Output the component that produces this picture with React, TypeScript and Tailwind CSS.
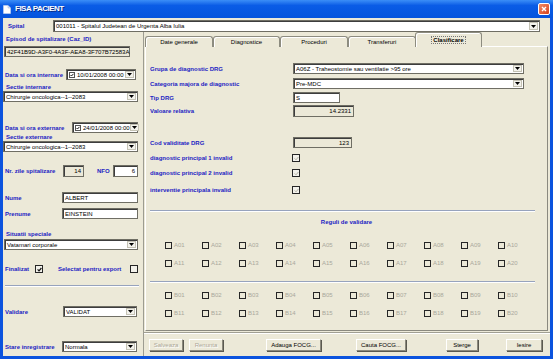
import React from "react";

const font = "font-['Liberation_Sans',Arial,sans-serif]";
const lbl = "text-[6px] leading-none font-bold text-[#2323c3] whitespace-nowrap";
const txt = "text-[6px] leading-none text-black whitespace-nowrap";

function Arrow() {
  return (
    <div className="w-[9px] my-[1px] mr-[1px] bg-[#f3f2ec] border border-[#c4c2b4] flex items-center justify-center shrink-0">
      <svg width="5" height="3" viewBox="0 0 5 3">
        <path d="M0 0H5L2.5 3Z" fill="#000" />
      </svg>
    </div>
  );
}

function Select({ value, className = "" }: { value: string; className?: string }) {
  return (
    <div
      className={`flex items-stretch h-[11px] bg-white border border-[#6f6e64] shadow-[inset_1px_1px_0_#3d3d3d] ${className}`}
    >
      <span className={`${txt} flex-1 flex items-center pl-[2px] overflow-hidden`}>{value}</span>
      <Arrow />
    </div>
  );
}

function Field({
  value,
  className = "",
  right = false,
  ro = false,
}: {
  value: string;
  className?: string;
  right?: boolean;
  ro?: boolean;
}) {
  return (
    <div
      className={`flex items-center h-[11px] border border-[#6f6e64] shadow-[inset_1px_1px_0_#3d3d3d] px-[2px] ${
        ro ? "bg-[#ECE9D8]" : "bg-white"
      } ${right ? "justify-end" : ""} ${className}`}
    >
      <span className={txt}>{value}</span>
    </div>
  );
}

function DateBox({ value, className = "" }: { value: string; className?: string }) {
  return (
    <div
      className={`flex items-stretch h-[11px] bg-white border border-[#6f6e64] shadow-[inset_1px_1px_0_#3d3d3d] ${className}`}
    >
      <div className="flex items-center pl-[2px] gap-[2px] flex-1">
        <div className="w-[6px] h-[6px] border border-[#555] bg-white flex items-center justify-center">
          <svg width="4" height="4" viewBox="0 0 4 4">
            <path d="M0.5 2L1.5 3L3.5 0.8" stroke="#000" strokeWidth="0.9" fill="none" />
          </svg>
        </div>
        <span className={txt}>{value}</span>
      </div>
      <Arrow />
    </div>
  );
}

function Check({ checked = false, faint = false, className = "" }: { checked?: boolean; faint?: boolean; className?: string }) {
  return (
    <div
      className={`w-[8px] h-[8px] border-[1.5px] border-[#252525] bg-[#f2f1ea] flex items-center justify-center shrink-0 ${className}`}
    >
      {checked && (
        <svg width="5" height="5" viewBox="0 0 5 5">
          <path d="M0.6 2.4L2 3.8L4.4 1" stroke="#111" strokeWidth="1.2" fill="none" />
        </svg>
      )}
      {faint && (
        <svg width="5" height="5" viewBox="0 0 5 5">
          <path d="M0.6 2.4L2 3.8L4.4 1" stroke="#b5b3a6" strokeWidth="1" fill="none" />
        </svg>
      )}
    </div>
  );
}

function Rule({ name }: { name: string }) {
  return (
    <div className="flex items-center gap-[2px]">
      <div className="w-[7px] h-[7px] border-[1.5px] border-[#262626] bg-[#ECE9D8]" />
      <span className="text-[6px] leading-none text-[#a9a89c] whitespace-nowrap">{name}</span>
    </div>
  );
}

function Sep({ className = "" }: { className?: string }) {
  return <div className={`h-[2px] border-t border-[#97a3bd] border-b border-b-white ${className}`} />;
}

function Btn({ label, disabled = false, className = "" }: { label: string; disabled?: boolean; className?: string }) {
  return (
    <div
      className={`h-[12px] flex items-center justify-center border border-t-white border-l-white border-r-[#8b897d] border-b-[#8b897d] shadow-[1px_1px_0_#5a5950] bg-[#ECE9D8] ${className}`}
    >
      <span
        className={`text-[6px] leading-none whitespace-nowrap ${
          disabled ? "text-[#aca899] [text-shadow:1px_1px_0_#fff]" : "text-black"
        }`}
      >
        {label}
      </span>
    </div>
  );
}

const tabs = ["Date generale", "Diagnostice", "Proceduri", "Transferuri"];
const tabW = ["w-[68px]", "w-[67px]", "w-[68px]", "w-[68px]"];

const aRow1 = ["A01", "A02", "A03", "A04", "A05", "A06", "A07", "A08", "A09", "A10"];
const aRow2 = ["A11", "A12", "A13", "A14", "A15", "A16", "A17", "A18", "A19", "A20"];
const bRow1 = ["B01", "B02", "B03", "B04", "B05", "B06", "B07", "B08", "B09", "B10"];
const bRow2 = ["B11", "B12", "B13", "B14", "B15", "B16", "B17", "B18", "B19", "B20"];

function RuleRow({ items, className = "" }: { items: string[]; className?: string }) {
  return (
    <div className={`grid grid-cols-[repeat(10,37px)] h-[8px] items-center ml-[19px] ${className}`}>
      {items.map((n) => (
        <Rule key={n} name={n} />
      ))}
    </div>
  );
}

function LeftColumn() {
  return (
    <div className="w-[140px] shrink-0 flex flex-col">
      <div className={`${lbl} h-[8px] flex items-center mt-[3px] pl-[3px]`}>Episod de spitalizare (Caz_ID)</div>
      <Field value="42F41B9D-A3F0-4A3F-AEA8-3F707B72583A" ro className="mt-[3px] ml-[1px] w-[126px]" />

      <div className="flex items-center h-[11px] mt-[12px] pl-[2px]">
        <span className={`${lbl} w-[61px]`}>Data si ora internare</span>
        <DateBox value="10/01/2008 00:00" className="w-[70px]" />
      </div>
      <div className={`${lbl} h-[8px] flex items-center mt-[3px] pl-[3px]`}>Sectie internare</div>
      <Select value="Chirurgie oncologica--1--2083" className="w-[135px]" />

      <div className="flex items-center h-[11px] mt-[20px] pl-[2px]">
        <span className={`${lbl} w-[67px]`}>Data si ora externare</span>
        <DateBox value="24/01/2008 00:00" className="w-[66px]" />
      </div>
      <div className={`${lbl} h-[8px] flex items-center pl-[3px]`}>Sectie externare</div>
      <Select value="Chirurgie oncologica--1--2083" className="w-[135px]" />

      <div className="flex items-center h-[12px] mt-[13px] pl-[2px]">
        <span className={`${lbl} w-[58px]`}>Nr. zile spitalizare</span>
        <Field value="14" ro right className="w-[21px] h-[12px]" />
        <span className={`${lbl} w-[16px] ml-[13px]`}>NFO</span>
        <Field value="6" right className="w-[25px] h-[12px]" />
      </div>

      <div className="flex items-center h-[11px] mt-[15px] pl-[2px]">
        <span className={`${lbl} w-[57px]`}>Nume</span>
        <Field value="ALBERT" className="w-[76px]" />
      </div>
      <div className="flex items-center h-[11px] mt-[5px] pl-[2px]">
        <span className={`${lbl} w-[57px]`}>Prenume</span>
        <Field value="EINSTEIN" className="w-[76px]" />
      </div>

      <div className={`${lbl} h-[8px] flex items-center mt-[11px] pl-[3px]`}>Situatii speciale</div>
      <Select value="Vatamari corporale" className="w-[134px] mt-[1px] ml-[1px]" />

      <div className="flex items-center h-[10px] mt-[14px] pl-[2px]">
        <span className={`${lbl} w-[30px]`}>Finalizat</span>
        <Check checked />
        <span className={`${lbl} w-[72px] ml-[15px]`}>Selectat pentru export</span>
        <Check />
      </div>

      <Sep className="mt-[11px] ml-[2px] w-[134px]" />

      <div className="flex items-center h-[11px] mt-[19px] pl-[2px]">
        <span className={`${lbl} w-[58px]`}>Validare</span>
        <Select value="VALIDAT" className="w-[74px]" />
      </div>
      <div className="flex items-center h-[11px] mt-[24px] pl-[2px]">
        <span className={`${lbl} w-[57px]`}>Stare inregistrare</span>
        <Select value="Normala" className="w-[75px]" />
      </div>
    </div>
  );
}

function FormRow({ label, children, className = "" }: { label: string; children: React.ReactNode; className?: string }) {
  return (
    <div className={`flex items-center pl-[4px] ${className}`}>
      <span className={`${lbl} w-[143px]`}>{label}</span>
      {children}
    </div>
  );
}

function TabPanel() {
  return (
    <div className="h-[285px] ml-[1px] mr-[2px] border border-t-white border-l-white border-r-[#8a897f] border-b-[#8a897f] bg-[#ECE9D8] flex flex-col">
      <FormRow label="Grupa de diagnostic DRG" className="mt-[16px] h-[11px]">
        <Select value="A06Z - Traheostomie sau ventilatie >95 ore" className="w-[231px]" />
      </FormRow>
      <FormRow label="Categoria majora de diagnostic" className="mt-[4px] h-[11px]">
        <Select value="Pre-MDC" className="w-[231px]" />
      </FormRow>
      <FormRow label="Tip DRG" className="mt-[3px] h-[11px]">
        <Field value="S" className="w-[47px] bg-[#f7f6f1]" />
      </FormRow>
      <FormRow label="Valoare relativa" className="mt-[2px] h-[12px]">
        <Field value="14.2331" ro right className="w-[61px] h-[12px]" />
      </FormRow>
      <FormRow label="Cod validitate DRG" className="mt-[20px] h-[11px]">
        <Field value="123" ro right className="w-[59px]" />
      </FormRow>
      <FormRow label="diagnostic principal 1 invalid" className="mt-[6px] h-[8px]">
        <Check faint className="-ml-[1px] w-[7px] h-[7px]" />
      </FormRow>
      <FormRow label="diagnostic principal 2 invalid" className="mt-[7px] h-[8px]">
        <Check faint className="-ml-[1px] w-[7px] h-[7px]" />
      </FormRow>
      <FormRow label="interventie principala invalid" className="mt-[9px] h-[8px]">
        <Check faint className="-ml-[1px] w-[7px] h-[7px]" />
      </FormRow>

      <Sep className="mt-[16px] ml-[4px] mr-[12px]" />
      <div className={`${lbl} h-[8px] mt-[6px] flex items-center justify-center`}>Reguli de validare</div>

      <RuleRow items={aRow1} className="mt-[15px]" />
      <RuleRow items={aRow2} className="mt-[10px]" />
      <Sep className="mt-[14px] ml-[4px] mr-[12px]" />
      <RuleRow items={bRow1} className="mt-[8px]" />
      <RuleRow items={bRow2} className="mt-[10px]" />
    </div>
  );
}

function RightColumn() {
  return (
    <div className="flex-1 flex flex-col border-l border-[#9d9c91]">
      <div className="h-[14px] flex items-end pl-[1px] relative z-10">
        {tabs.map((t, i) => (
          <div
            key={t}
            className={`${tabW[i]} h-[11px] -mb-[1px] border border-b-0 border-[#8d8c80] rounded-t-[3px] bg-[#ECE9D8] flex items-center justify-center shadow-[inset_1px_1px_0_#fff]`}
          >
            <span className={txt}>{t}</span>
          </div>
        ))}
        <div className="w-[67px] h-[15px] -mb-[1px] -ml-[1px] border border-b-0 border-[#8d8c80] rounded-t-[3px] bg-[#ECE9D8] flex items-center justify-center shadow-[inset_1px_1px_0_#fff]">
          <span className={`${txt} font-bold outline outline-1 outline-dotted outline-[#777] px-[1px]`}>Clasificare</span>
        </div>
      </div>
      <TabPanel />
      <div className="flex-1 mt-[1px] border-t border-[#a09f93] shadow-[inset_0_1px_0_#fff] flex items-start pt-[6px]">
        <Btn label="Salveaza" disabled className="w-[34px] ml-[5px]" />
        <Btn label="Renunta" disabled className="w-[34px] ml-[6px]" />
        <Btn label="Adauga FOCG..." className="w-[55px] ml-[43px]" />
        <Btn label="Cauta FOCG..." className="w-[50px] ml-[35px]" />
        <Btn label="Sterge" className="w-[32px] ml-[40px]" />
        <Btn label="Iesire" className="w-[36px] ml-[28px]" />
      </div>
    </div>
  );
}

export default function App() {
  return (
    <div className={`w-[553px] h-[359px] bg-[#0b53de] flex flex-col overflow-hidden ${font}`}>
      <div className="h-[18px] shrink-0 bg-linear-to-b from-[#3b8ef7] via-[#0a5ce6] via-30% to-[#0554dd] flex items-center pl-[3px] pr-[3px]">
        <svg width="8" height="9" viewBox="0 0 8 9" className="mr-[4px]">
          <path d="M0.5 0.5H5L7.5 3V8.5H0.5Z" fill="#fff" stroke="#c9d6f0" strokeWidth="0.6" />
          <path d="M5 0.5V3H7.5" fill="#dfe6f5" stroke="#9fb1d6" strokeWidth="0.5" />
        </svg>
        <span className="text-[8px] font-bold text-white tracking-[-0.5px] [text-shadow:1px_1px_0_#0a2f8a] flex-1">
          FISA PACIENT
        </span>
        <div className="w-[12px] h-[12px] rounded-[2px] border border-white bg-linear-to-br from-[#f08a63] to-[#d6401a] flex items-center justify-center">
          <svg width="6" height="6" viewBox="0 0 6 6">
            <path d="M1 1L5 5M5 1L1 5" stroke="#fff" strokeWidth="1.4" />
          </svg>
        </div>
      </div>
      <div className="flex-1 mx-[3px] mb-[3px] bg-[#ECE9D8] flex flex-col">
        <div className="flex items-center h-[12px] mt-[2px] shrink-0">
          <span className={`${lbl} w-[50px] pl-[5px]`}>Spital</span>
          <Select value="001011 - Spitalul Judetean de Urgenta Alba Iulia" className="w-[487px] h-[12px]" />
        </div>
        <div className="flex flex-1">
          <LeftColumn />
          <RightColumn />
        </div>
      </div>
    </div>
  );
}
